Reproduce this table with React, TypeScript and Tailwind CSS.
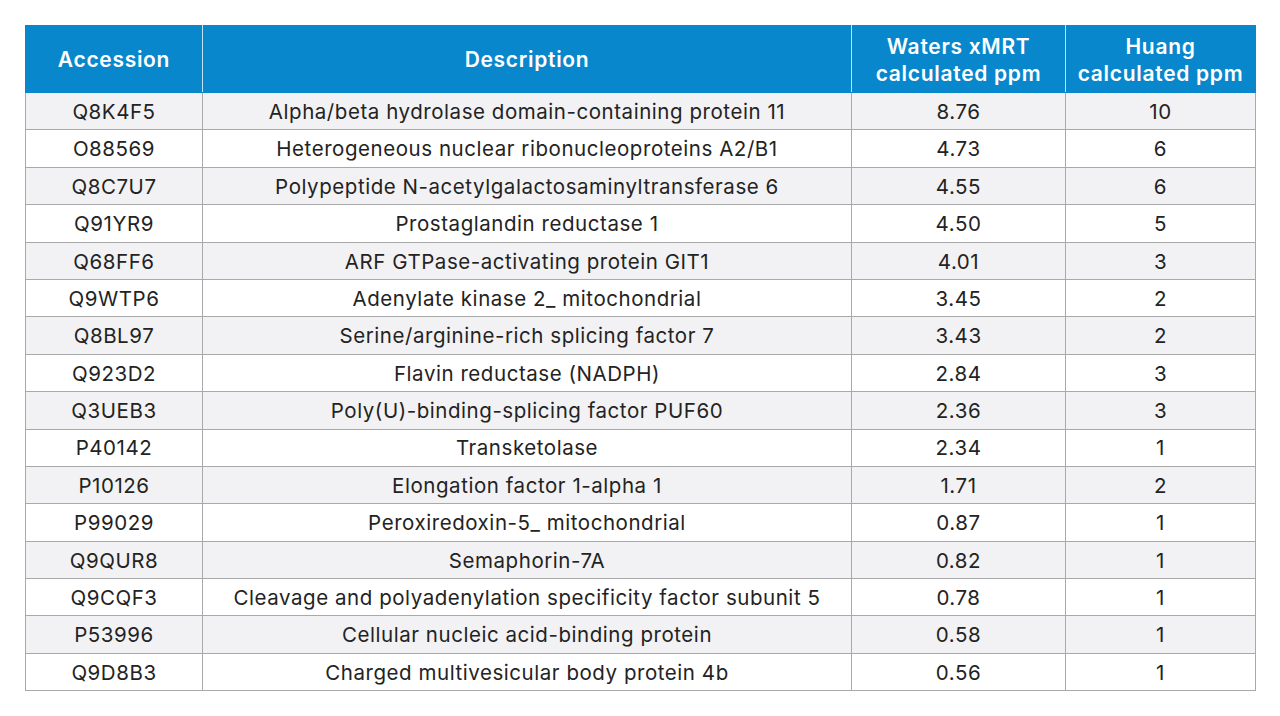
const rows: [string, string, string, string][] = [
  ["Q8K4F5", "Alpha/beta hydrolase domain-containing protein 11", "8.76", "10"],
  ["O88569", "Heterogeneous nuclear ribonucleoproteins A2/B1", "4.73", "6"],
  ["Q8C7U7", "Polypeptide N-acetylgalactosaminyltransferase 6", "4.55", "6"],
  ["Q91YR9", "Prostaglandin reductase 1", "4.50", "5"],
  ["Q68FF6", "ARF GTPase-activating protein GIT1", "4.01", "3"],
  ["Q9WTP6", "Adenylate kinase 2_ mitochondrial", "3.45", "2"],
  ["Q8BL97", "Serine/arginine-rich splicing factor 7", "3.43", "2"],
  ["Q923D2", "Flavin reductase (NADPH)", "2.84", "3"],
  ["Q3UEB3", "Poly(U)-binding-splicing factor PUF60", "2.36", "3"],
  ["P40142", "Transketolase", "2.34", "1"],
  ["P10126", "Elongation factor 1-alpha 1", "1.71", "2"],
  ["P99029", "Peroxiredoxin-5_ mitochondrial", "0.87", "1"],
  ["Q9QUR8", "Semaphorin-7A", "0.82", "1"],
  ["Q9CQF3", "Cleavage and polyadenylation specificity factor subunit 5", "0.78", "1"],
  ["P53996", "Cellular nucleic acid-binding protein", "0.58", "1"],
  ["Q9D8B3", "Charged multivesicular body protein 4b", "0.56", "1"],
];

export default function App() {
  return (
    <div className="h-[716px] w-[1280px] bg-white pl-[25px] pt-[25px] font-['Inter',sans-serif] text-[#232323]">
      <table className="w-[1230px] table-fixed border-collapse text-center">
        <colgroup>
          <col className="w-[177px]" />
          <col className="w-[649px]" />
          <col className="w-[214px]" />
          <col className="w-[190px]" />
        </colgroup>
        <thead>
          <tr className="h-[67px] bg-[#0887cc] text-[21px] font-semibold leading-[27px] tracking-[0.7px] text-white">
            <th className="border border-[#0887cc] border-r-[#bfe2f5] font-semibold">Accession</th>
            <th className="border border-[#0887cc] border-r-[#bfe2f5] font-semibold">Description</th>
            <th className="border border-[#0887cc] border-r-[#bfe2f5] pt-[2px] font-semibold">
              Waters xMRT
              <br />
              calculated ppm
            </th>
            <th className="border border-[#0887cc] pt-[2px] font-semibold">
              Huang
              <br />
              calculated ppm
            </th>
          </tr>
        </thead>
        <tbody className="text-[20.5px] tracking-[0.55px]">
          {rows.map((r, i) => (
            <tr key={r[0]} className={i % 2 === 0 ? "h-[37.4px] bg-[#f2f2f4]" : "h-[37.4px] bg-white"}>
              {r.map((c, j) => (
                <td key={j} className="border border-[#a9a9a9] p-0 pt-[2px] leading-none">
                  {c}
                </td>
              ))}
            </tr>
          ))}
        </tbody>
      </table>
    </div>
  );
}
